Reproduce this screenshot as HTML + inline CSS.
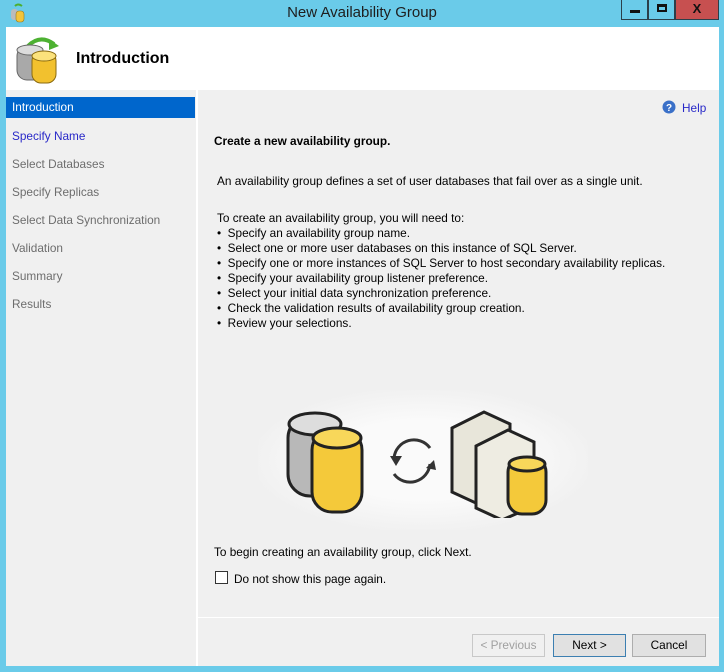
<!DOCTYPE html>
<html><head><meta charset="utf-8"><style>
*{margin:0;padding:0;box-sizing:border-box}
body{width:724px;height:672px;background:#6acbe9;position:relative;overflow:hidden;font-family:"Liberation Sans",sans-serif;font-size:11.8px;color:#000}
.abs{position:absolute}
.title{left:0;top:4px;width:724px;text-align:center;font-size:15px;color:#1e1e1e}
.btn{top:0;height:20px;border:1px solid #2b3f4a;border-top:none}
.header{left:6px;top:27px;width:713px;height:63px;background:#fff}
.nav{left:6px;top:90px;width:190px;height:576px;background:#f0f0f0}
.vsep{left:196px;top:90px;width:2px;height:576px;background:#fff}
.content{left:198px;top:90px;width:521px;height:576px;background:#f0f0f0}
.nav div{position:absolute;left:6px;color:#6d6d6d}
.sel{left:0!important;width:189px;height:21px;background:#0066cc;color:#fff!important;padding:3px 6px}
.fb{height:23px;border:1px solid #adadad;background:#e1e1e1;text-align:center;line-height:21px}
ul{list-style:none}
</style></head><body>
<svg class="abs" style="left:9px;top:3px" width="18" height="20" viewBox="0 0 18 20"><path d="M6 3 Q9 0 13 3" stroke="#4caf30" stroke-width="2" fill="none"/><rect x="2" y="6" width="7" height="11" rx="3" fill="#bbb"/><rect x="7" y="8" width="8" height="11" rx="3" fill="#f3c43a" stroke="#9a7a1a" stroke-width=".6"/></svg>
<div class="abs title">New Availability Group</div>
<div class="abs btn" style="left:621px;width:27px;background:#6acbe9"><div class="abs" style="left:8px;top:10px;width:10px;height:3px;background:#111"></div></div>
<div class="abs btn" style="left:648px;width:27px;background:#6acbe9"><div class="abs" style="left:8px;top:4px;width:10px;height:8px;border:2px solid #111;border-top-width:3px"></div></div>
<div class="abs btn" style="left:675px;width:44px;background:#c75050;color:#111;font-weight:bold;font-size:13px;text-align:center;line-height:17px">X</div>
<div class="abs header">
<svg class="abs" style="left:8px;top:5px" width="50" height="54" viewBox="0 0 50 54">
<path d="M14 14 Q26 2 40 12" stroke="#4db132" stroke-width="4" fill="none"/><path d="M35 7 L45 14 L35 18Z" fill="#4db132"/>
<rect x="3" y="14" width="26" height="34" rx="10" fill="#a9a9a9" stroke="#666" stroke-width="1"/><ellipse cx="16" cy="18" rx="13" ry="5" fill="#dcdcdc" stroke="#666" stroke-width="1"/>
<rect x="18" y="20" width="24" height="31" rx="9" fill="#f2c12e" stroke="#8a6a10" stroke-width="1"/><ellipse cx="30" cy="24" rx="12" ry="5" fill="#fce27c" stroke="#8a6a10" stroke-width="1"/>
</svg>
<div class="abs" style="left:70px;top:23px;font-size:16px;font-weight:bold">Introduction</div>
</div>
<div class="abs nav">
<div class="sel" style="top:7px">Introduction</div>
<div style="top:39px;color:#2828c8">Specify Name</div>
<div style="top:67px">Select Databases</div>
<div style="top:95px">Specify Replicas</div>
<div style="top:123px">Select Data Synchronization</div>
<div style="top:151px">Validation</div>
<div style="top:179px">Summary</div>
<div style="top:207px">Results</div>
</div>
<div class="abs vsep"></div>
<div class="abs content">
<svg class="abs" style="left:464px;top:10px" width="14" height="14"><circle cx="7" cy="7" r="6.5" fill="#3a70c8"/><text x="7" y="11" font-size="10" font-weight="bold" fill="#fff" text-anchor="middle" font-family="Liberation Sans">?</text></svg>
<div class="abs" style="left:484px;top:11px;color:#2828c8">Help</div>
<div class="abs" style="left:16px;top:44px;font-weight:bold">Create a new availability group.</div>
<div class="abs" style="left:19px;top:84px">An availability group defines a set of user databases that fail over as a single unit.</div>
<div class="abs" style="left:19px;top:121px;line-height:15px">To create an availability group, you will need to:
<ul>
<li>•&nbsp;&nbsp;Specify an availability group name.</li>
<li>•&nbsp;&nbsp;Select one or more user databases on this instance of SQL Server.</li>
<li>•&nbsp;&nbsp;Specify one or more instances of SQL Server to host secondary availability replicas.</li>
<li>•&nbsp;&nbsp;Specify your availability group listener preference.</li>
<li>•&nbsp;&nbsp;Select your initial data synchronization preference.</li>
<li>•&nbsp;&nbsp;Check the validation results of availability group creation.</li>
<li>•&nbsp;&nbsp;Review your selections.</li>
</ul></div>
<div class="abs" style="left:60px;top:300px;width:330px;height:140px;border-radius:60px;background:radial-gradient(ellipse at center,#fafafa 40%,#f0f0f0 75%)"></div>
<svg class="abs" style="left:80px;top:308px" width="290" height="120" viewBox="0 0 290 120">
<rect x="10" y="18" width="55" height="80" rx="22" fill="#b8b8b8" stroke="#222" stroke-width="3"/>
<ellipse cx="37" cy="26" rx="26" ry="11" fill="#ddd" stroke="#222" stroke-width="3"/>
<rect x="34" y="32" width="50" height="82" rx="20" fill="#f4c93a" stroke="#222" stroke-width="3"/>
<ellipse cx="59" cy="40" rx="24" ry="10" fill="#f8d75a" stroke="#222" stroke-width="3"/>
<path d="M116 60 A20 20 0 0 1 152 50" stroke="#333" stroke-width="3" fill="none"/><path d="M112 58 L118 68 L124 58Z" fill="#333"/>
<path d="M152 66 A20 20 0 0 1 116 76" stroke="#333" stroke-width="3" fill="none"/><path d="M148 70 L156 62 L158 72Z" fill="#333"/>
<path d="M174 30 L206 14 L232 26 L232 90 L200 106 L174 94Z" fill="#e8e6da" stroke="#222" stroke-width="3"/>
<path d="M198 48 L230 32 L256 44 L256 108 L224 122 L198 110Z" fill="#eeece2" stroke="#222" stroke-width="3"/>
<rect x="230" y="60" width="38" height="56" rx="14" fill="#f4c93a" stroke="#222" stroke-width="3"/>
<ellipse cx="249" cy="66" rx="18" ry="7" fill="#f8d75a" stroke="#222" stroke-width="3"/>
</svg>
<div class="abs" style="left:16px;top:455px">To begin creating an availability group, click Next.</div>
<div class="abs" style="left:17px;top:481px;width:13px;height:13px;border:1px solid #333;background:#fff"></div>
<div class="abs" style="left:36px;top:482px">Do not show this page again.</div>
<div class="abs" style="left:0;top:527px;width:521px;height:1px;background:#fff"></div>
<div class="abs fb" style="left:274px;top:544px;width:73px;color:#a0a0a0;background:#f0f0f0;border-color:#c8c8c8">&lt; Previous</div>
<div class="abs fb" style="left:355px;top:544px;width:73px;border-color:#3c7fb1">Next &gt;</div>
<div class="abs fb" style="left:434px;top:544px;width:74px">Cancel</div>
</div>
</body></html>
